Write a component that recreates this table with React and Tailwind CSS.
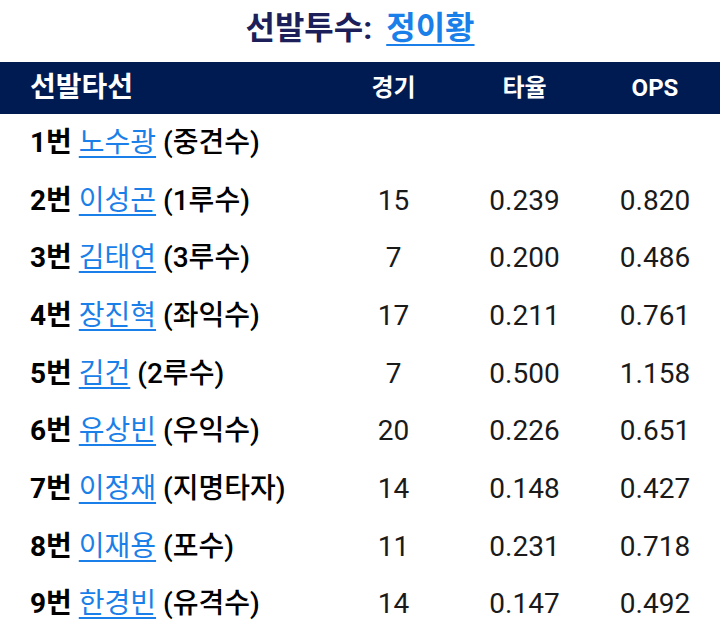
import React from "react";

const lineup = [
  { no: "1번", name: "노수광", pos: "(중견수)", g: "", avg: "", ops: "" },
  { no: "2번", name: "이성곤", pos: "(1루수)", g: "15", avg: "0.239", ops: "0.820" },
  { no: "3번", name: "김태연", pos: "(3루수)", g: "7", avg: "0.200", ops: "0.486" },
  { no: "4번", name: "장진혁", pos: "(좌익수)", g: "17", avg: "0.211", ops: "0.761" },
  { no: "5번", name: "김건", pos: "(2루수)", g: "7", avg: "0.500", ops: "1.158" },
  { no: "6번", name: "유상빈", pos: "(우익수)", g: "20", avg: "0.226", ops: "0.651" },
  { no: "7번", name: "이정재", pos: "(지명타자)", g: "14", avg: "0.148", ops: "0.427" },
  { no: "8번", name: "이재용", pos: "(포수)", g: "11", avg: "0.231", ops: "0.718" },
  { no: "9번", name: "한경빈", pos: "(유격수)", g: "14", avg: "0.147", ops: "0.492" },
];

export default function App() {
  return (
    <div
      className="w-[720px] h-[642px] bg-white overflow-hidden"
      style={{ fontFamily: "Roboto, 'Noto Sans CJK KR', sans-serif" }}
    >
      {/* 선발투수 */}
      <div className="h-[62px] flex items-center justify-center text-[32px] font-bold text-[#1c1f5a] leading-none pb-[6px]">
        <span>선발투수:</span>
        <a href="#" className="ml-[14px] text-[#1a7fe8] underline underline-offset-[5px] decoration-[2px]">
          정이황
        </a>
      </div>

      {/* 선발타선 */}
      <div className="grid grid-cols-[1fr_131px_131px_130px] h-[52px] bg-[#001b52] text-white items-center">
        <div className="pl-[30px] text-[28px] font-bold">선발타선</div>
        <div className="text-center text-[24px] font-bold">경기</div>
        <div className="text-center text-[24px] font-bold">타율</div>
        <div className="text-center text-[24px] font-bold">OPS</div>
      </div>

      <div>
        {lineup.map((p) => (
          <div
            key={p.no}
            className="grid grid-cols-[1fr_131px_131px_130px] h-[57.7px] items-center text-[28px] text-[#1a1a1a]"
          >
            <div className="pl-[30px] whitespace-nowrap">
              <span className="font-bold text-black">{p.no}</span>{" "}
              <a href="#" className="text-[#1a7fe8] underline underline-offset-[4px]">
                {p.name}
              </a>{" "}
              <span className="font-medium text-black">{p.pos}</span>
            </div>
            <div className="text-center">{p.g}</div>
            <div className="text-center">{p.avg}</div>
            <div className="text-center">{p.ops}</div>
          </div>
        ))}
      </div>
    </div>
  );
}
